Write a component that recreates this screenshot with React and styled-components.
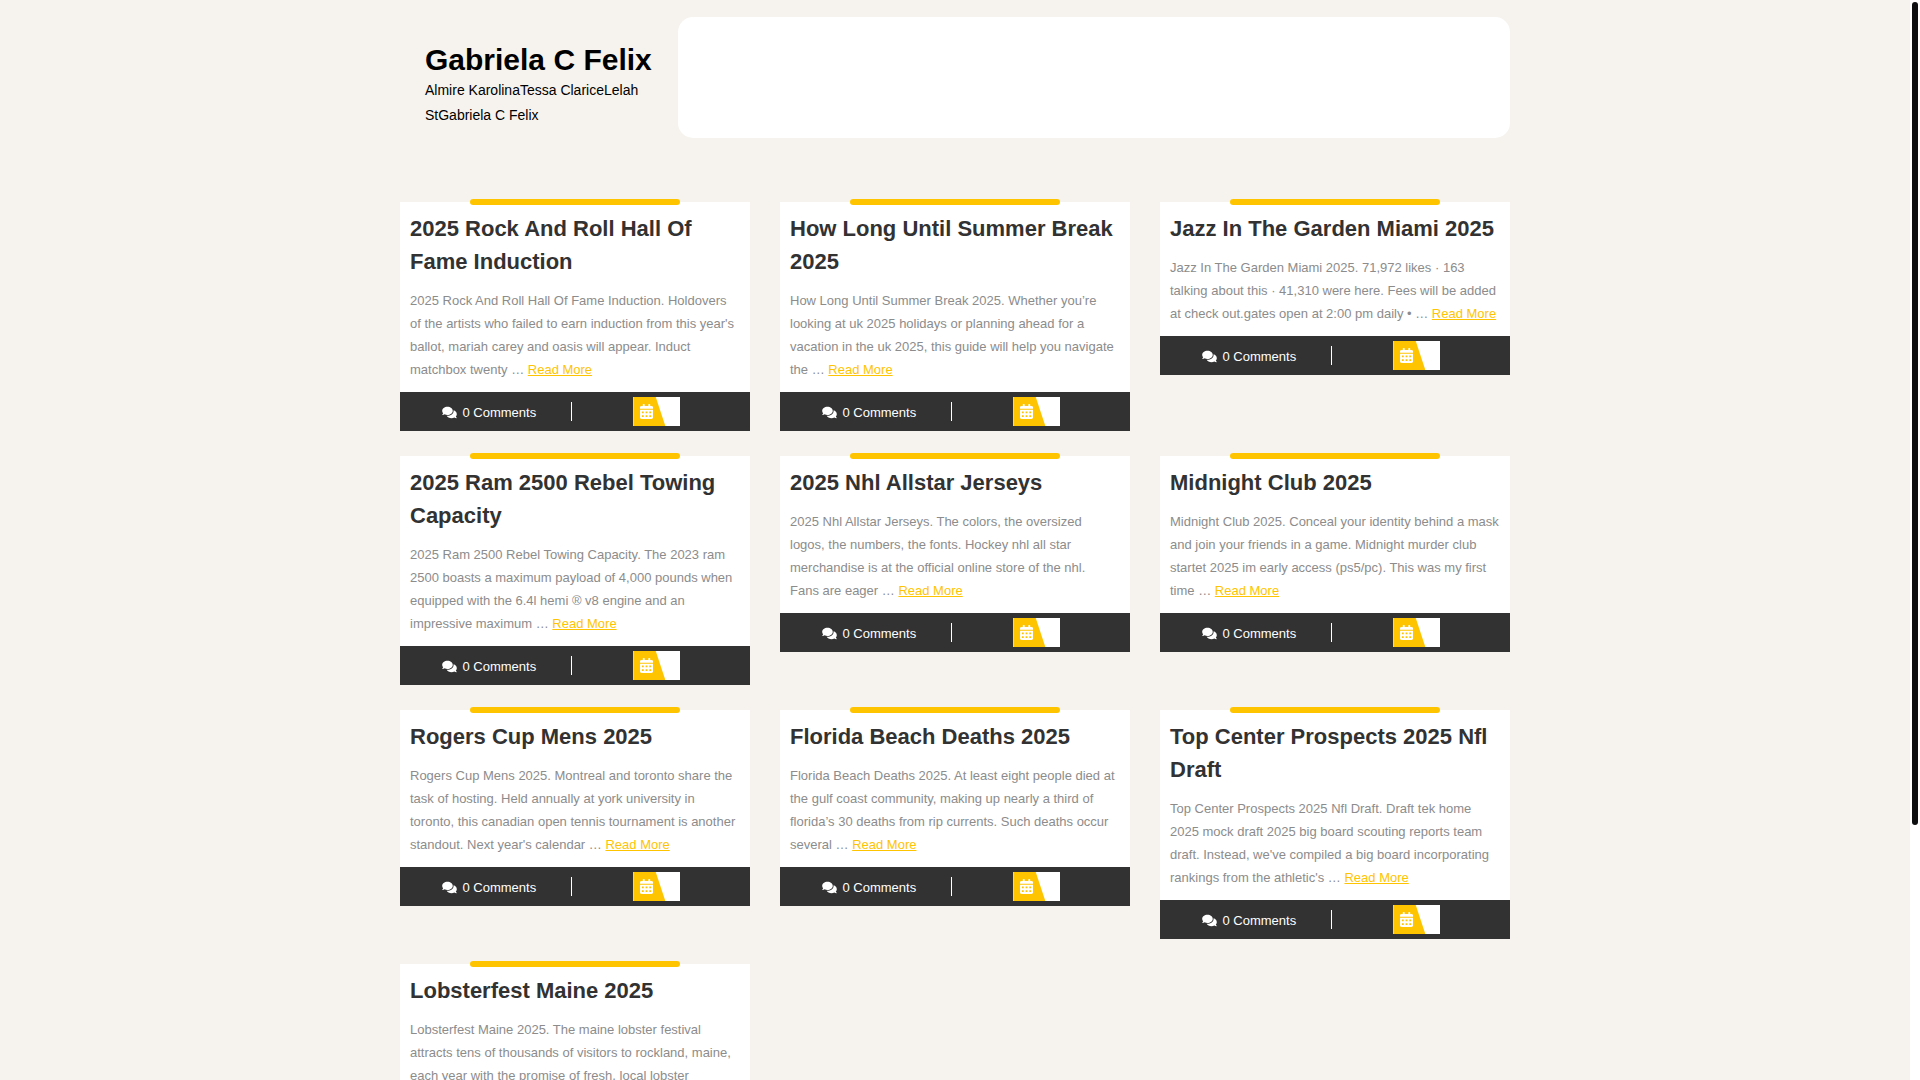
import React from "react"
import styled, { createGlobalStyle } from "styled-components"
import { FaComments, FaCalendarAlt } from "react-icons/fa"

const posts = [
  {
    title: "2025 Rock And Roll Hall Of Fame Induction",
    text: "2025 Rock And Roll Hall Of Fame Induction. Holdovers of the artists who failed to earn induction from this year's ballot, mariah carey and oasis will appear. Induct matchbox twenty …",
  },
  {
    title: "How Long Until Summer Break 2025",
    text: "How Long Until Summer Break 2025. Whether you’re looking at uk 2025 holidays or planning ahead for a vacation in the uk 2025, this guide will help you navigate the …",
  },
  {
    title: "Jazz In The Garden Miami 2025",
    text: "Jazz In The Garden Miami 2025. 71,972 likes · 163 talking about this · 41,310 were here. Fees will be added at check out.gates open at 2:00 pm daily • …",
  },
  {
    title: "2025 Ram 2500 Rebel Towing Capacity",
    text: "2025 Ram 2500 Rebel Towing Capacity. The 2023 ram 2500 boasts a maximum payload of 4,000 pounds when equipped with the 6.4l hemi ® v8 engine and an impressive maximum …",
  },
  {
    title: "2025 Nhl Allstar Jerseys",
    text: "2025 Nhl Allstar Jerseys. The colors, the oversized logos,\u00a0the numbers, the fonts. Hockey nhl all star merchandise is at the official online store of the nhl. Fans\u00a0are eager …",
  },
  {
    title: "Midnight Club 2025",
    text: "Midnight Club 2025. Conceal your identity behind a mask and join your friends in a game. Midnight murder club startet 2025 im early access (ps5/pc). This was my first time …",
  },
  {
    title: "Rogers Cup Mens 2025",
    text: "Rogers Cup Mens 2025. Montreal and toronto share the task of hosting. Held annually at york university in toronto, this canadian open tennis tournament is another standout. Next year's calendar …",
  },
  {
    title: "Florida Beach Deaths 2025",
    text: "Florida Beach Deaths 2025. At least eight people died at the gulf coast community, making up nearly a third of florida’s 30 deaths from rip currents. Such deaths occur several …",
  },
  {
    title: "Top Center Prospects 2025 Nfl Draft",
    text: "Top Center Prospects 2025 Nfl Draft. Draft tek home 2025 mock draft 2025 big board scouting reports team draft. Instead, we've compiled a big board incorporating rankings from the athletic's …",
  },
  {
    title: "Lobsterfest Maine 2025",
    text: "Lobsterfest Maine 2025. The maine lobster festival attracts tens of thousands of visitors to rockland, maine, each year with the promise of fresh, local lobster delicacies …",
  },
]

function Post({ title, text }) {
  return (
    <Card>
      <CardBody>
        <CardTitle>{title}</CardTitle>
        <Excerpt>
          {text} <ReadMore href="#">Read More</ReadMore>
        </Excerpt>
      </CardBody>
      <Meta>
        <Comments>
          <FaComments />
          0 Comments
        </Comments>
        <DateCell>
          <DateBadge>
            <DateIcon>
              <FaCalendarAlt />
            </DateIcon>
          </DateBadge>
        </DateCell>
      </Meta>
    </Card>
  )
}

function App() {
  return (
    <>
      <GlobalStyle />
      <Page>
        <Container>
          <Header>
            <Brand>
              <SiteTitle>Gabriela C Felix</SiteTitle>
              <Tagline>Almire KarolinaTessa ClariceLelah StGabriela C Felix</Tagline>
            </Brand>
            <NavPanel />
          </Header>
          <Grid>
            {posts.map((post) => (
              <Post key={post.title} {...post} />
            ))}
          </Grid>
        </Container>
      </Page>
      <ScrollTrack>
        <ScrollThumb />
      </ScrollTrack>
    </>
  )
}

const GlobalStyle = createGlobalStyle`
  * {
    box-sizing: border-box;
  }
  html {
    scrollbar-width: none;
  }
  body {
    margin: 0;
    background: #f6f3ee;
    font-family: "Liberation Sans", Arial, sans-serif;
  }
`
const Page = styled.div`
  padding-right: 10px;
`
const Container = styled.div`
  max-width: 1140px;
  margin: 0 auto;
  padding: 17px 15px 25px;
`
const Header = styled.header`
  display: grid;
  grid-template-columns: 1fr 3fr;
  margin-bottom: 64px;
`
const Brand = styled.div`
  padding: 25px 25px 10px;
  color: #000;
`
const SiteTitle = styled.h1`
  margin: 0;
  font-size: 30px;
  line-height: 36px;
  white-space: nowrap;
`
const Tagline = styled.p`
  margin: 0;
  font-size: 14px;
  line-height: 25px;
`
const NavPanel = styled.nav`
  background: #fff;
  border-radius: 15px;
`
const Grid = styled.main`
  display: grid;
  grid-template-columns: repeat(3, 1fr);
  align-items: start;
  gap: 25px 30px;
`
const Card = styled.article`
  position: relative;
  background: #fff;

  &::before {
    content: "";
    position: absolute;
    top: -3px;
    left: 20%;
    width: 60%;
    height: 6px;
    border-radius: 3px;
    background: #ffc400;
  }
`
const CardBody = styled.div`
  padding: 10px 10px 11px;
`
const CardTitle = styled.h2`
  margin: 0 0 11px;
  color: #323232;
  font-size: 22px;
  line-height: 33px;
`
const Excerpt = styled.p`
  margin: 0;
  color: #8c8c8c;
  font-size: 13px;
  line-height: 23px;
`
const ReadMore = styled.a`
  color: #ffc400;
  text-decoration: underline;
`
const Meta = styled.footer`
  display: flex;
  align-items: center;
  padding: 5px 8px;
  background: #323232;
  color: #fff;
  font-size: 13px;
`
const Comments = styled.div`
  flex: 0 0 49%;
  display: flex;
  align-items: center;
  justify-content: center;
  gap: 5px;
  height: 19px;
  padding-top: 2px;
  border-right: 1px solid #fff;

  svg {
    width: 15px;
  }
`
const DateCell = styled.div`
  flex: 1;
  display: flex;
  justify-content: center;
`
const DateBadge = styled.div`
  width: 47px;
  height: 29px;
  background: #fff;
`
const DateIcon = styled.div`
  display: flex;
  align-items: center;
  width: 32px;
  height: 29px;
  padding-left: 7px;
  background: #ffc400;
  clip-path: polygon(0 0, 70% 0, 100% 100%, 0 100%);
  font-size: 15px;

  svg {
    width: 13px;
  }
`
const ScrollTrack = styled.div`
  position: fixed;
  top: 0;
  right: 0;
  bottom: 0;
  width: 10px;
  padding: 2px;
  background: #fff;
`
const ScrollThumb = styled.div`
  height: 76.5%;
  border-radius: 3px;
  background: #0c0e0f;
`

export default App
